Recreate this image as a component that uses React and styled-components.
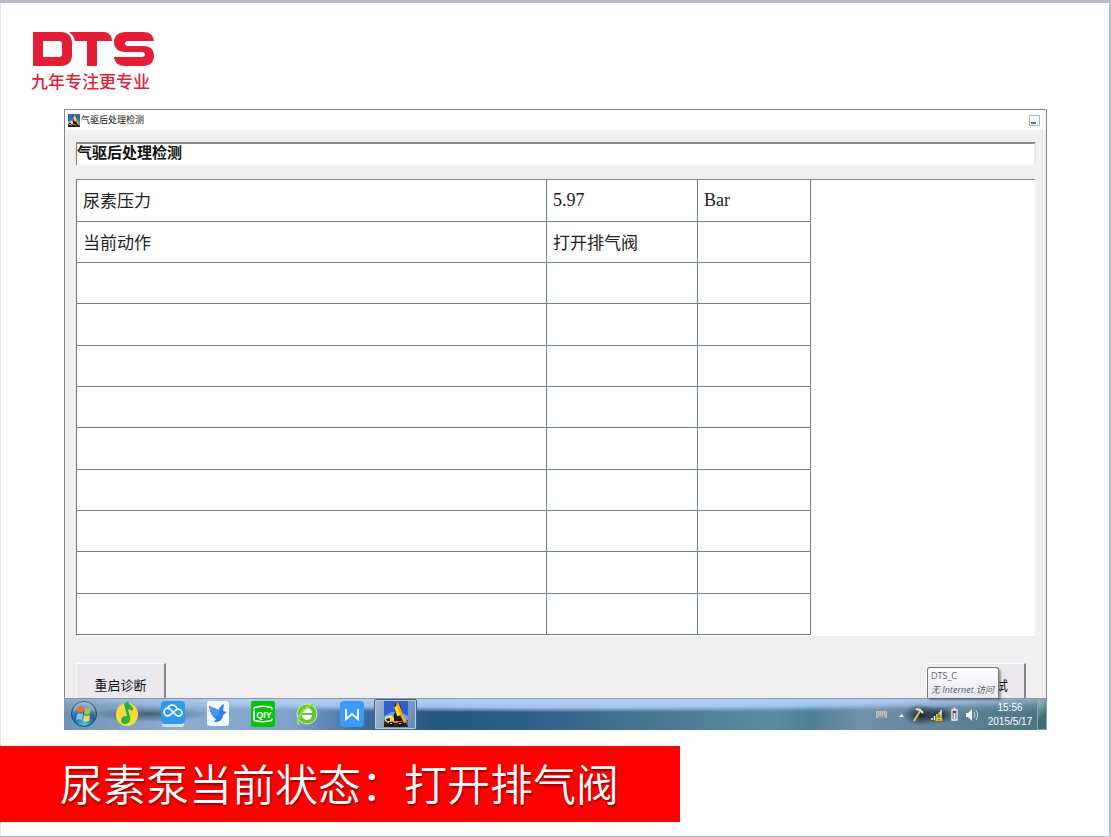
import React from 'react'
import styled, { createGlobalStyle } from 'styled-components'

const GlobalStyle = createGlobalStyle`
    * {
        box-sizing: border-box;
    }
    body {
        margin: 0;
        background: #fff;
        font-family: "Noto Sans CJK SC", sans-serif;
    }
`

// 幻灯片
const Slide = styled.div`
    display: flex;
    flex-direction: column;
    min-height: 100vh;
    background: #fff;
    border: solid #b9bbc8;
    border-width: 3px 2px 1px 0;
    box-shadow: inset 1px 0 0 #e6e6e8;
`

const Brand = styled.header`
    display: flex;
    flex-direction: column;
    align-items: flex-start;
    padding: 28px 31px 16px;
    color: #e41e36;
`

const Slogan = styled.p`
    margin: 2px 0 0;
    font: 500 17px/24px "Noto Sans CJK SC", sans-serif;
`

// 软件窗口
const Window = styled.section`
    display: flex;
    flex-direction: column;
    margin: 0 62px 0 64px;
    background: #efefef;
    border: 1px solid #858585;
    border-bottom: 0;
`

const TitleBar = styled.div`
    display: flex;
    align-items: center;
    gap: 1px;
    height: 20px;
    padding: 0 6px 0 3px;
    background: #fff;
    color: #111;
    font: 9px/20px "Noto Sans CJK SC", sans-serif;
`

const MinButton = styled.button`
    display: flex;
    align-items: flex-end;
    width: 11px;
    height: 11px;
    margin-left: auto;
    padding: 1px;
    background: #fff;
    border: 1px solid #a3b8c8;

    &::after {
        content: '';
        width: 5px;
        height: 2px;
        background: #4a76b0;
    }
`

const Content = styled.div`
    display: flex;
    flex-direction: column;
    padding: 12px 10px 0 11px;
`

const NameInput = styled.input`
    width: 100%;
    height: 24px;
    padding: 0 0 6px;
    background: #fff;
    border: solid;
    border-width: 2px 2px 2px 1px;
    border-color: #8a8a8a #e8e8e8 #f8f8f8 #777;
    outline: none;
    color: #111;
    font: bold 15px/18px "Noto Sans CJK SC", sans-serif;
`

const Panel = styled.div`
    margin-top: 13px;
    background: #fff;
    border: solid;
    border-width: 1px 2px 1px 1px;
    border-color: #858a90 #f6f6f6 #fff #6b7880;
`

const Table = styled.table`
    width: 76.7%;
    height: 455px;
    table-layout: fixed;
    border-collapse: collapse;
`

const Cell = styled.td`
    width: ${({ $width }) => $width};
    height: 41px;
    padding: 0 6px;
    border: 1px solid #71818c;
    border-top: 0;
    color: #222;
    font: ${({ $latin }) => ($latin ? '18px/24px "Liberation Serif", serif' : '17px/24px "Noto Sans CJK SC", sans-serif')};

    &:first-child {
        border-left: 0;
    }
`

const Actions = styled.div`
    position: relative;
    display: flex;
    justify-content: space-between;
    padding: 27px 10px 0 0;
`

const ActionButton = styled.button`
    width: ${({ $wide }) => ($wide ? 100 : 90)}px;
    height: 35px;
    padding: 7px ${({ $wide }) => ($wide ? 16 : 0)}px 0 0;
    background: #ebe9ed;
    border: solid;
    border-width: 1px 2px 0 1px;
    border-color: #fbfbfb #85858a #fbfbfb #fbfbfb;
    color: #111;
    font: 13px/24px "Noto Sans CJK SC", sans-serif;
    text-align: ${({ $wide }) => ($wide ? 'right' : 'center')};
`

// 网络提示
const Tooltip = styled.div`
    position: absolute;
    right: 37px;
    bottom: 0;
    width: 72px;
    height: 31px;
    padding: 1px 0 0 3px;
    background: linear-gradient(#fff, #e6e7f0);
    border: 1px solid #77777a;
    border-bottom: 0;
    border-radius: 3px 3px 0 0;
    box-shadow: 2px 2px 2px rgba(0, 0, 0, 0.35);
    color: #5c5c60;
    font: 9px/14px "Open Sans", "Noto Sans CJK SC", sans-serif;
    white-space: nowrap;
`

const Status = styled.em`
    display: block;
`

const Taskbar = styled.nav`
    display: flex;
    align-items: stretch;
    height: 32px;
    margin: 0 -1px;
    background:
        radial-gradient(ellipse 520px 13px at 500px 0, rgba(182, 214, 250, 0.95), rgba(176, 208, 246, 0.85) 65%, rgba(140, 180, 220, 0)),
        linear-gradient(rgba(150, 180, 220, 0.6), rgba(150, 180, 220, 0) 14px),
        radial-gradient(ellipse 60px 8px at 86px 15px, rgba(45, 75, 90, 0.75), rgba(45, 75, 90, 0)),
        linear-gradient(90deg, #7292b2, #8eadd0 12%, #7ea2cb 23%, #3c6898 31%, #245684 38%, #2d5f8c 47%, #477890 60%, #5a8ca0 72%, #4c8094 76%, #7290aa 81%, #64869a 88%, #497480);
    border-top: 1px solid #8b98a6;
`

const Launcher = styled.button`
    display: flex;
    align-items: center;
    justify-content: center;
    width: ${({ $width }) => $width || 45}px;
    padding: 0 0 2px;
    background: ${({ $active }) => ($active ? 'linear-gradient(120deg, #9fb9d0, #6288ac)' : 'none')};
    border: ${({ $active }) => ($active ? '1px solid #45637f' : '0')};
    border-radius: 2px;
    box-shadow: ${({ $active }) => ($active ? 'inset 0 0 0 1px #b4cadd' : 'none')};
`

const Tray = styled.div`
    display: flex;
    align-items: center;
    gap: 4px;
    margin-left: auto;
    color: #fff;
`

const Clock = styled.time`
    display: flex;
    flex-direction: column;
    width: 46px;
    font: 10px/14px "Liberation Sans", sans-serif;
    text-align: center;
`

const ShowDesktop = styled.button`
    align-self: stretch;
    width: 10px;
    padding: 0;
    background: linear-gradient(135deg, #a1bec5, #3e6c72 60%);
    border: 1px solid #86a5ad;
`

const Banner = styled.h1`
    align-self: flex-start;
    min-width: 61.3%;
    margin: 16px 0 0;
    padding: 4px 56px 8px 60px;
    background: #f00;
    color: #fff;
    font: 350 43px/64px "Noto Sans CJK SC", sans-serif;
    text-shadow: 1px 2px 2px rgba(110, 0, 0, 0.7);
    white-space: nowrap;
`

const DtsLogo = () => (
    <svg width="123" height="36" viewBox="0 0 123 36" role="img" aria-label="DTS">
        <g fill="currentColor">
            <path fillRule="evenodd" d="M2 1h28c7 0 11 4 11 11v12c0 7-4 11-11 11H2zM12 10v16h16c2 0 3-1 3-3V13c0-2-1-3-3-3z" />
            <path d="M38 1h35c5 0 8 4 8 9H66v25H56V10H44c-1-4-3-7-6-9z" />
            <path d="M95 1h17c7 0 10 3 11 9H97c-4 0-4 5 0 5h15c8 0 11 4 11 10s-4 10-11 10H95c-8 0-11-3-12-9h28c4 0 4-5 0-5H94c-7 0-11-4-11-10S87 1 95 1z" />
        </g>
    </svg>
)

const TruckIcon = ({ width, height }) => (
    <svg width={width} height={height} viewBox="0 0 24 26" preserveAspectRatio="none" aria-hidden="true">
        <path fill="#2f62cf" d="M0 0h24v26H0z" />
        <path fill="#6d9af0" d="M0 15l8-4h9l7 4v4H0z" />
        <path fill="#2c221c" d="M0 21l5-4 4 1 2-6-1-7 2-3 4 1 3 12 3 7 2 4H0z" />
        <path fill="#f5ac16" d="M13 1l2 2 4 11 4 7-3 1-4-8-3 1-3-9 2-1z" />
        <path fill="#ffe14a" d="M1 16l6-2 3 3v4l-4 2-5-3zM11 7l2-1 3 8-2 1z" />
        <path fill="#15151f" d="M2 18l4-1v3H3zM10 12l3 4-1 4h-2zM15 16l3 2-1 3h-3z" />
        <path fill="#d98312" d="M8 20h10v2H8z" />
        <circle cx="7" cy="23" r="2.500" fill="#11131c" />
        <circle cx="16" cy="23" r="2.500" fill="#11131c" />
        <path fill="#e9c96a" d="M6 22h2v1H6zM15 22h2v1h-2z" />
    </svg>
)

const StartIcon = () => (
    <svg width="28" height="28" viewBox="0 0 28 28">
        <defs>
            <radialGradient id="orb" cx="50%" cy="90%" r="85%">
                <stop offset="0" stopColor="#45c4ec" />
                <stop offset="0.5" stopColor="#1f639b" />
                <stop offset="1" stopColor="#86a8c4" />
            </radialGradient>
        </defs>
        <circle cx="14" cy="14" r="12.5" fill="url(#orb)" stroke="#21486d" />
        <path d="M3 12a11 11 0 0 1 22 0c-6-3-16-3-22 0z" fill="#fff" opacity="0.2" />
        <path fill="#f06a2b" d="M8 7c2-1 4-1 6 0l-1 6c-2-1-4-1-6 0z" />
        <path fill="#9bcc42" d="M15 8c2 1 4 1 6 0l-1 6c-2 1-4 1-6 0z" />
        <path fill="#7cc6f8" d="M7 14c2-1 4-1 6 0l-1 6c-2-1-4-1-6 0z" />
        <path fill="#ffd348" d="M14 15c2 1 4 1 6 0l-1 6c-2 1-4 1-6 0z" />
    </svg>
)

const MusicIcon = () => (
    <svg width="24" height="26" viewBox="0 0 24 26">
        <ellipse cx="12" cy="13.5" rx="11" ry="11.5" fill="#fcd936" />
        <path d="M9 3l4-3c0 4 6 5 5 9-1 1-3 0-5-1l2 8c1 5-2 7-5 7-4 0-5-4-3-6 1-2 3-2 5-2z" fill="#20b14d" />
    </svg>
)

const CloudIcon = () => (
    <svg width="24" height="26" viewBox="0 0 24 26">
        <rect x="1" y="18" width="22" height="8" rx="2" fill="#d6dde4" />
        <rect width="24" height="23" rx="4" fill="#2c9bea" />
        <path d="M13 12L9 8C6 6 3 8 3 11s3 5 6 3l6-5c3-2 6 0 6 3s-4 4-6 2l-2-2M7 7c1-4 8-4 9 1" fill="none" stroke="#fff" strokeWidth="1.6" strokeLinecap="round" />
    </svg>
)

const BirdIcon = () => (
    <svg width="22" height="25" viewBox="0 0 22 25">
        <rect width="22" height="25" rx="3" fill="#f5f9ff" />
        <path d="M2 5l10 4c0-2 2-5 5-6l-1 7 4 1-4 3c0 4-3 7-7 7h-2l2-3C5 16 3 11 2 5z" fill="#2f80ee" />
        <path d="M2 5l10 4 1 5-5 2C5 14 3 10 2 5z" fill="#4b97f5" />
    </svg>
)

const VideoIcon = () => (
    <svg width="24" height="26" viewBox="0 0 24 26">
        <rect width="24" height="26" rx="2" fill="#05c40b" />
        <path d="M3 8c0-2 1-2 3-2 4-1 8-1 12 0 2 0 3 0 3 2M3 18c0 2 1 2 3 2 4 1 8 1 12 0 2 0 3 0 3-2M3 10v7" fill="none" stroke="#fff" strokeWidth="1.6" strokeLinecap="round" />
        <text x="13" y="17" fill="#fff" fontFamily="Liberation Sans, sans-serif" fontWeight="bold" fontSize="9" textAnchor="middle">QIY</text>
    </svg>
)

const BrowserIcon = () => (
    <svg width="24" height="26" viewBox="0 0 24 26">
        <circle cx="12" cy="13" r="10" fill="#69c52e" stroke="#d3efbb" />
        <path d="M7 12a5 5 0 0 1 10 0zM7 14h10a5 5 0 0 1-10 0z" fill="#fff" />
        <path d="M4 24C0 19 8 5 20 3" fill="none" stroke="#95dd54" strokeWidth="2" />
    </svg>
)

const WriterIcon = () => (
    <svg width="24" height="26" viewBox="0 0 24 26">
        <rect width="24" height="26" rx="4" fill="#3b9bfa" />
        <path d="M6 8v10l6-5 6 5V8" fill="none" stroke="#fff" strokeWidth="2" />
    </svg>
)

const TrayIcons = () => (
    <svg width="108" height="24" viewBox="0 0 108 24" aria-hidden="true">
        <defs>
            <radialGradient id="shade">
                <stop offset="0" stopColor="#121c24" stopOpacity="0.9" />
                <stop offset="1" stopColor="#121c24" stopOpacity="0" />
            </radialGradient>
        </defs>
        <ellipse cx="46" cy="12" rx="18" ry="11" fill="url(#shade)" />
        <ellipse cx="64" cy="12" rx="16" ry="9" fill="url(#shade)" />
        <path fill="#b8bdc2" d="M1 8h11v7H1z" />
        <path d="M2 10h9M2 12h9" stroke="#8b939a" strokeDasharray="1 1" />
        <path d="M3 14h7" stroke="#737b82" />
        <path fill="#f4f7fa" d="M24 14l2.500-3 2.500 3z" />
        <path d="M39 18l6-10" stroke="#f0b62c" strokeWidth="2" />
        <path d="M41 6l4 1 3 3" fill="none" stroke="#e8e8e8" strokeWidth="2" />
        <path d="M57 17v-2M59.500 17v-4M62 17v-6M64.500 17V9M66 17V7" stroke="#eef2f5" strokeWidth="1.5" />
        <path fill="#ffc51e" stroke="#8b6913" strokeWidth="0.5" d="M64 9l4 9h-8z" />
        <path d="M64 12v3M64 16v1" stroke="#342700" />
        <path d="M77 7v10h5V7zM78.500 5.500h2" fill="#34495a" stroke="#f5f7f8" strokeWidth="1.3" />
        <path d="M78.500 10h2v6h-2z" fill="#fff" />
        <path d="M91 10h2l4-4v12l-4-4h-2z" fill="#f2f5f7" />
        <path d="M99 9c1 2 1 4 0 6M101 7c2 3 2 7 0 10" fill="none" stroke="#dce4e9" />
    </svg>
)

const rows = [
    ['尿素压力', '5.97', 'Bar'],
    ['当前动作', '打开排气阀', ''],
    ...Array.from({ length: 9 }, () => ['', '', '']),
]

const widths = ['64%', '20.6%', '15.4%']

const isLatin = text => /^[\w.]+$/.test(text)

const launchers = [
    { label: '音乐', Icon: MusicIcon, width: 46 },
    { label: '云盘', Icon: CloudIcon },
    { label: '迅雷', Icon: BirdIcon },
    { label: '爱奇艺', Icon: VideoIcon },
    { label: '浏览器', Icon: BrowserIcon, width: 44 },
    { label: 'WPS', Icon: WriterIcon },
]

const App = () => (
    <>
        <GlobalStyle />
        <Slide>
            <Brand>
                <DtsLogo />
                <Slogan>九年专注更专业</Slogan>
            </Brand>

            <Window>
                <TitleBar>
                    <TruckIcon width={12} height={13} />
                    <span>气驱后处理检测</span>
                    <MinButton aria-label="最小化" />
                </TitleBar>

                <Content>
                    <NameInput aria-label="检测项目" defaultValue="气驱后处理检测" />
                    <Panel>
                        <Table>
                            <tbody>
                                {rows.map((row, i) => (
                                    <tr key={i}>
                                        {row.map((text, j) => (
                                            <Cell key={j} $width={widths[j]} $latin={isLatin(text)}>{text}</Cell>
                                        ))}
                                    </tr>
                                ))}
                            </tbody>
                        </Table>
                    </Panel>

                    <Actions>
                        <ActionButton>重启诊断</ActionButton>
                        <ActionButton $wide>试</ActionButton>
                        <Tooltip role="tooltip">
                            DTS_C
                            <Status>无 Internet 访问</Status>
                        </Tooltip>
                    </Actions>
                </Content>

                <Taskbar>
                    <Launcher $width={40} aria-label="开始"><StartIcon /></Launcher>
                    {launchers.map(({ label, Icon, width }) => (
                        <Launcher key={label} $width={width} aria-label={label}><Icon /></Launcher>
                    ))}
                    <Launcher $width={43} $active aria-label="气驱后处理检测">
                        <TruckIcon width={24} height={26} />
                    </Launcher>
                    <Tray>
                        <TrayIcons />
                        <Clock>
                            <span>15:56</span>
                            <span>2015/5/17</span>
                        </Clock>
                        <ShowDesktop aria-label="显示桌面" />
                    </Tray>
                </Taskbar>
            </Window>

            <Banner>尿素泵当前状态：打开排气阀</Banner>
        </Slide>
    </>
)

export default App
